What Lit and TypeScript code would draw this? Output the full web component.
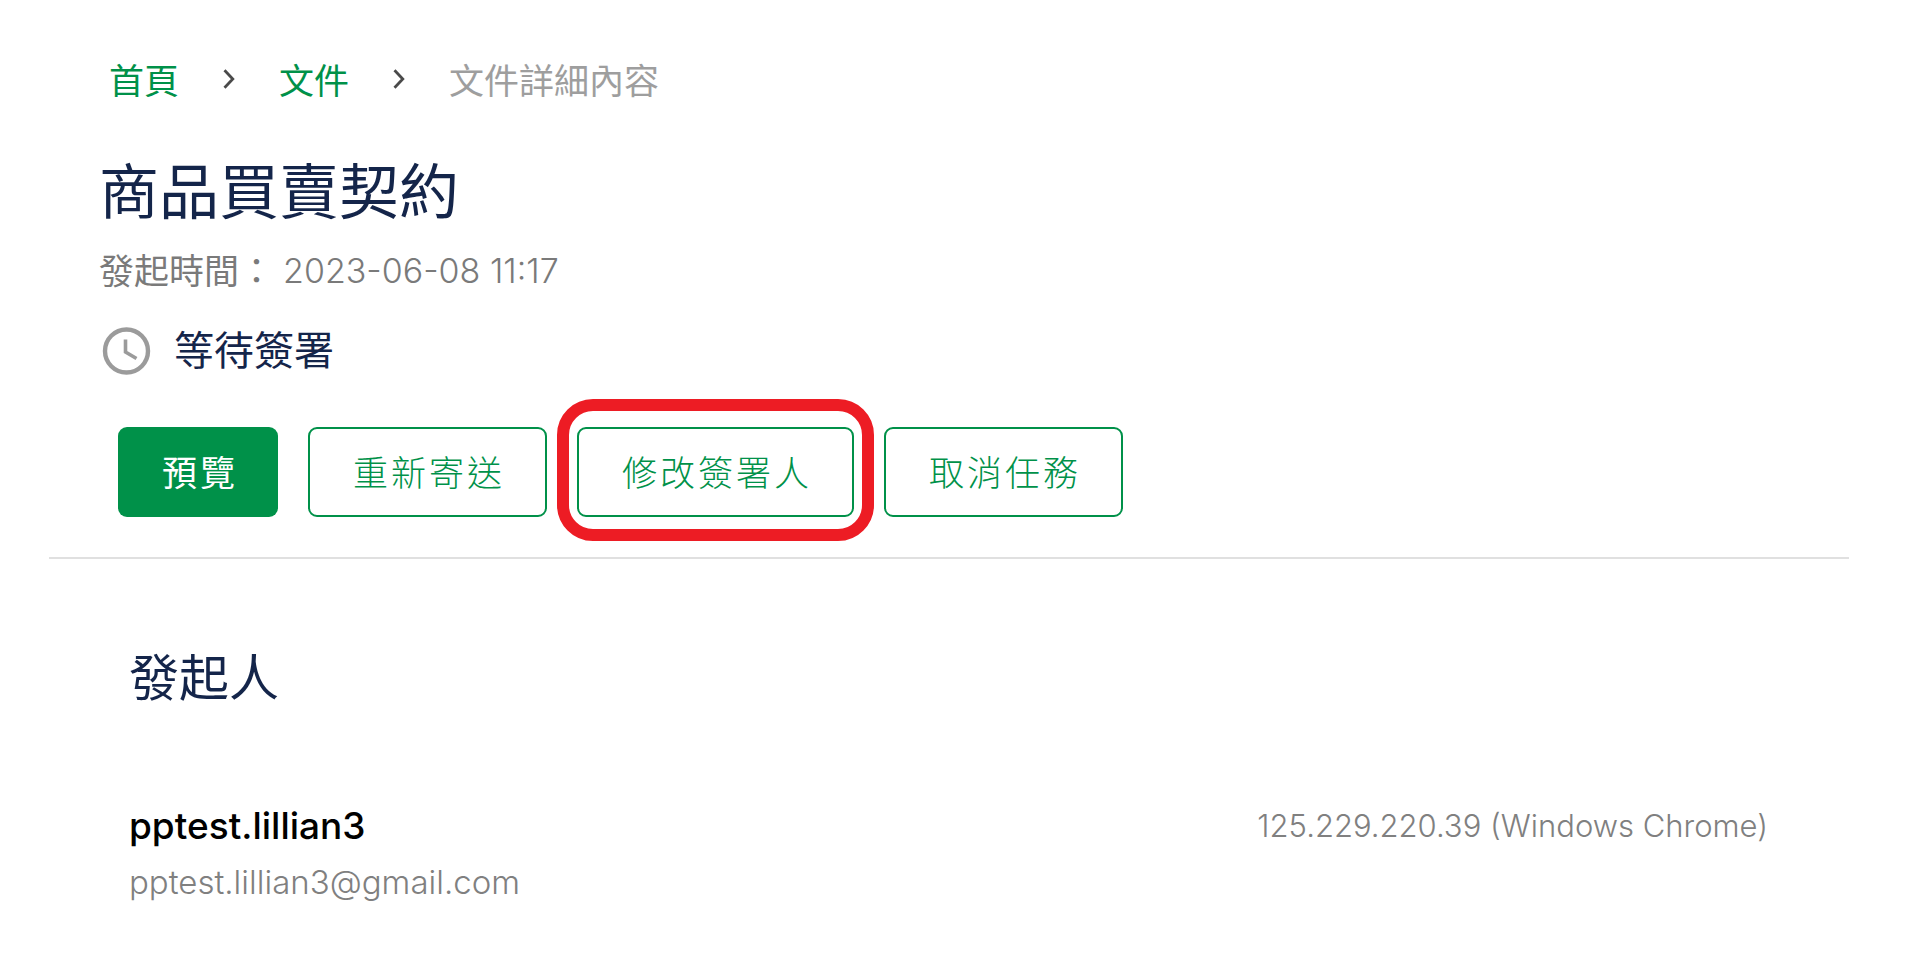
import { LitElement, html, css } from "lit";
import { customElement } from "lit/decorators.js";

interface Action {
  label: string;
  primary?: boolean;
  marked?: boolean;
}

const ACTIONS: Action[] = [
  { label: "預覽", primary: true },
  { label: "重新寄送" },
  { label: "修改簽署人", marked: true },
  { label: "取消任務" },
];

const chevron = html`<svg class="chevron" viewBox="0 0 12 20" aria-hidden="true">
  <path d="M1.5 1.2 L9.8 10 L1.5 18.8" fill="none" stroke="currentColor" stroke-width="2.8" />
</svg>`;

@customElement("app-root")
export class AppRoot extends LitElement {
  static styles = css`
    :host {
      display: block;
      min-height: 100vh;
      box-sizing: border-box;
      background: #fff;
      color: #14254a;
      font-family: Inter, "Noto Sans CJK TC", sans-serif;
    }
    h1,
    h2,
    p {
      margin: 0;
      font-weight: 400;
    }
    .head {
      padding: 57px 100px 40px 99px;
    }
    .crumbs {
      display: flex;
      align-items: center;
      gap: 44px;
      padding-left: 10px;
      font-size: 35px;
      line-height: 48px;
    }
    .crumbs a {
      color: #009149;
      text-decoration: none;
    }
    .current {
      color: #9e9e9e;
    }
    .chevron {
      width: 12px;
      height: 20px;
      padding-bottom: 4px;
      color: #4a4a4a;
    }
    .title {
      margin-top: 51px;
      font-size: 60px;
      line-height: 72px;
    }
    .time {
      display: flex;
      gap: 9px;
      margin-top: 19px;
      color: #7a7a7a;
      font-size: 35px;
      line-height: 48px;
    }
    .latin {
      font-size: 34px;
      font-weight: 300;
    }
    .status {
      display: flex;
      align-items: center;
      gap: 22px;
      margin-top: 28px;
      font-size: 40px;
      line-height: 56px;
    }
    .clock {
      width: 53px;
      height: 53px;
      color: #9b9b9b;
    }
    .actions {
      display: flex;
      gap: 30px;
      margin-top: 48px;
      padding-left: 19px;
    }
    .slot {
      position: relative;
    }
    .btn {
      display: block;
      height: 90px;
      padding: 0 40px 4px 43px;
      border: 2px solid #009149;
      border-radius: 9px;
      background: #fff;
      color: #009149;
      font: inherit;
      font-size: 35px;
      font-weight: 300;
      letter-spacing: 3px;
    }
    .primary {
      padding: 0 40px 4px 44px;
      border: 0;
      background: #009149;
      color: #fff;
      font-weight: 400;
    }
    .mark {
      position: absolute;
      inset: -28px -20px -24px;
      border: 12px solid #ed1c24;
      border-radius: 36px;
      pointer-events: none;
    }
    .rule {
      margin: 0 71px 0 49px;
      border: 0;
      border-top: 2px solid #e0e0e0;
    }
    .sender {
      padding: 89px 152px 60px 129px;
    }
    .heading {
      font-size: 50px;
      line-height: 60px;
    }
    .row {
      display: flex;
      justify-content: space-between;
      margin-top: 94px;
      line-height: 48px;
    }
    .name {
      color: #000;
      font-size: 37px;
      font-weight: 500;
    }
    .email {
      margin-top: 8px;
      font-size: 33px;
    }
    .origin {
      font-size: 31px;
    }
    .muted {
      color: #808080;
      font-weight: 300;
    }
  `;

  render() {
    return html`
      <header class="head">
        <nav class="crumbs" aria-label="導覽路徑">
          <a href="#home">首頁</a>${chevron}<a href="#documents">文件</a>${chevron}
          <span class="current" aria-current="page">文件詳細內容</span>
        </nav>
        <h1 class="title">商品買賣契約</h1>
        <p class="time"><span>發起時間：</span><time class="latin">2023-06-08 11:17</time></p>
        <p class="status">
          <svg class="clock" viewBox="0 0 53 53" fill="none" stroke="currentColor" aria-hidden="true">
            <circle cx="27.5" cy="26" r="21.5" stroke-width="4.4" />
            <path d="M26.5 14.5 V27 L37.5 33.5" stroke-width="3.6" />
          </svg>
          <span>等待簽署</span>
        </p>
        <div class="actions">
          ${ACTIONS.map(
            (a) => html`<div class="slot">
              <button type="button" class="btn ${a.primary ? "primary" : ""}">${a.label}</button>
              ${a.marked ? html`<span class="mark"></span>` : ""}
            </div>`
          )}
        </div>
      </header>
      <hr class="rule" />
      <section class="sender">
        <h2 class="heading">發起人</h2>
        <div class="row">
          <div>
            <p class="name">pptest.lillian3</p>
            <p class="email muted">pptest.lillian3@gmail.com</p>
          </div>
          <p class="origin muted">125.229.220.39 (Windows Chrome)</p>
        </div>
      </section>
    `;
  }
}
